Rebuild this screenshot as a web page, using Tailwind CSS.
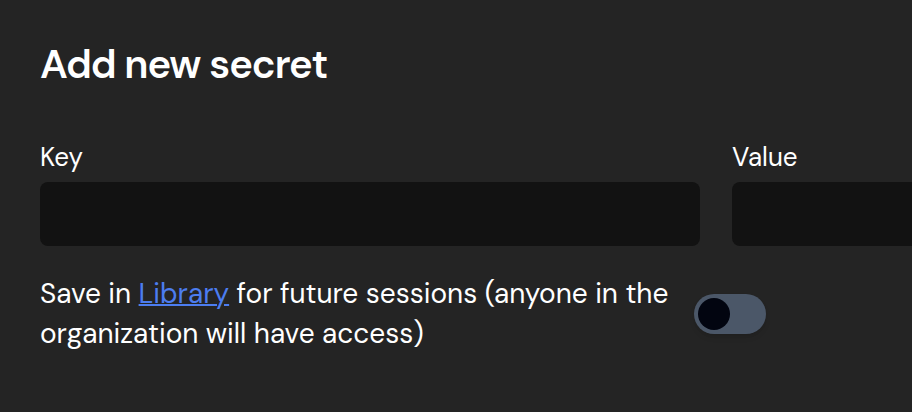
<!DOCTYPE html>
<html lang="en">
<head>
<meta charset="utf-8">
<title>Add new secret</title>
<script src="https://cdn.jsdelivr.net/npm/@tailwindcss/browser@4"></script>
</head>
<body class="min-h-screen bg-[#242424] font-['DM_Sans',Inter,sans-serif] text-white">
<main class="overflow-x-hidden pt-10 pb-14 pl-10">
  <h1 class="text-[40px] leading-12 font-semibold tracking-tight">Add new secret</h1>
  <form>
    <div class="mt-13 flex gap-8">
      <div class="w-[660px] shrink-0">
        <label for="key" class="block text-[26px] leading-[34px]">Key</label>
        <input id="key" type="text" class="mt-2 block h-16 w-full rounded-lg bg-[#121212] px-4 text-[26px]">
      </div>
      <div class="w-[660px] shrink-0">
        <label for="value" class="block text-[26px] leading-[34px]">Value</label>
        <input id="value" type="text" class="mt-2 block h-16 w-full rounded-lg bg-[#121212] px-4 text-[26px]">
      </div>
    </div>
    <div class="mt-7 flex items-center gap-6">
      <label for="save" class="w-[630px] text-[28px] leading-10">Save in <a href="#" class="text-[#4c7df0] underline decoration-2">Library</a> for future sessions (anyone in the organization will have access)</label>
      <input id="save" type="checkbox" role="switch" class="h-10 w-18 shrink-0 appearance-none rounded-full bg-[#4b5768] p-1 shadow-md before:block before:size-8 before:rounded-full before:bg-[#020510] checked:before:translate-x-8">
    </div>
  </form>
</main>
</body>
</html>
